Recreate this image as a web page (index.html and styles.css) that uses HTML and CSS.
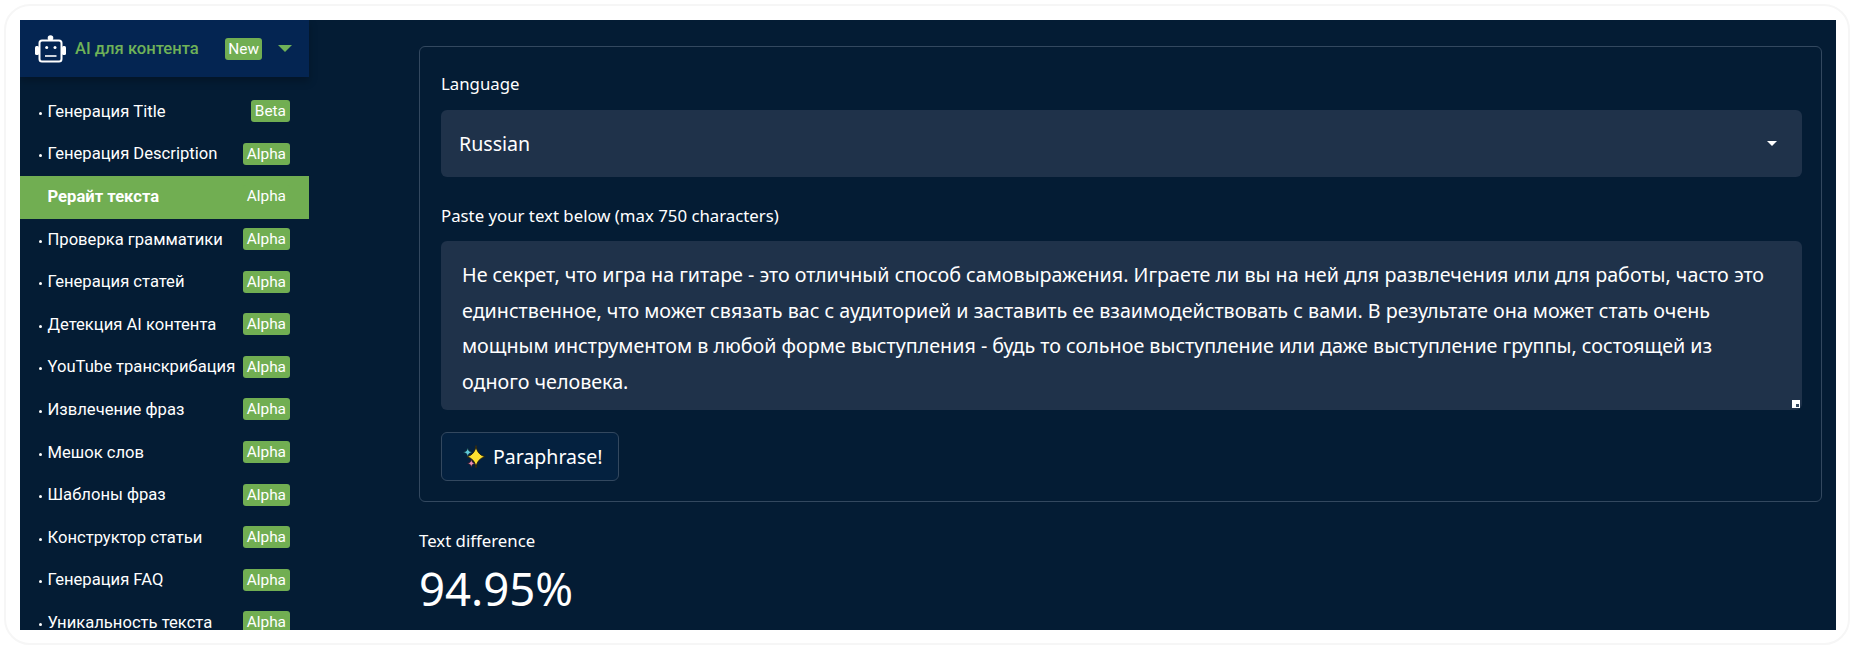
FILE: index.html
```html
<!DOCTYPE html>
<html>

<head>
    <meta charset="UTF-8">
    <title>AI для контента</title>
    <link rel="stylesheet" href="styles.css">
</head>

<body>
    <div class="frame">
        <div class="app">
            <aside class="sidebar">
                <div class="side-header">
                    <svg class="robot" viewBox="0 0 32 28" width="32" height="28">
                        <circle cx="16.5" cy="3" r="2.8" fill="#fff" />
                        <rect x="1" y="11" width="4" height="9" rx="1.5" fill="#fff" />
                        <rect x="28" y="11" width="4" height="9" rx="1.5" fill="#fff" />
                        <rect x="5.5" y="5.5" width="22" height="21" rx="2.5" fill="#042552" stroke="#fff" stroke-width="2" />
                        <circle cx="12.7" cy="12.5" r="1.5" fill="#fff" />
                        <circle cx="21" cy="12.5" r="1.5" fill="#fff" />
                        <rect x="11" y="20.2" width="11.5" height="1.6" fill="#fff" />
                    </svg>
                    <span class="side-title">AI для контента</span>
                    <span class="badge badge-new">New</span>
                    <span class="caret"></span>
                </div>
                <ul class="menu">
                    <li><span class="menu-label">Генерация Title</span><span class="badge">Beta</span></li>
                    <li><span class="menu-label">Генерация Description</span><span class="badge">Alpha</span></li>
                    <li class="active"><span class="menu-label">Рерайт текста</span><span class="badge">Alpha</span></li>
                    <li><span class="menu-label">Проверка грамматики</span><span class="badge">Alpha</span></li>
                    <li><span class="menu-label">Генерация статей</span><span class="badge">Alpha</span></li>
                    <li><span class="menu-label">Детекция AI контента</span><span class="badge">Alpha</span></li>
                    <li><span class="menu-label">YouTube транскрибация</span><span class="badge">Alpha</span></li>
                    <li><span class="menu-label">Извлечение фраз</span><span class="badge">Alpha</span></li>
                    <li><span class="menu-label">Мешок слов</span><span class="badge">Alpha</span></li>
                    <li><span class="menu-label">Шаблоны фраз</span><span class="badge">Alpha</span></li>
                    <li><span class="menu-label">Конструктор статьи</span><span class="badge">Alpha</span></li>
                    <li><span class="menu-label">Генерация FAQ</span><span class="badge">Alpha</span></li>
                    <li><span class="menu-label">Уникальность текста</span><span class="badge">Alpha</span></li>
                </ul>
            </aside>
            <main class="content">
                <form class="form-card">
                    <label class="field-label">Language</label>
                    <div class="select">
                        <span>Russian</span>
                        <span class="select-caret"></span>
                    </div>
                    <label class="field-label field-label-second">Paste your text below (max 750 characters)</label>
                    <div class="textarea">
                        Не секрет, что игра на гитаре - это отличный способ самовыражения. Играете ли вы на ней для развлечения или для работы, часто это единственное, что может связать вас с аудиторией и заставить ее взаимодействовать с вами. В результате она может стать очень мощным инструментом в любой форме выступления - будь то сольное выступление или даже выступление группы, состоящей из одного человека.
                        <span class="resize-handle"></span>
                    </div>
                    <button type="button" class="submit">
                        <svg viewBox="0 0 24 24" width="24" height="24">
                            <path d="M14 .5 Q14.8 9.5 23 11.8 Q14.8 14 14 23 Q13.2 14 5 11.8 Q13.2 9.5 14 .5 Z" fill="#fde030" stroke="#2a2410" stroke-width="1" />
                            <path d="M5.7 3 Q6.2 6.8 10 7.3 Q6.2 7.8 5.7 11.6 Q5.2 7.8 1.4 7.3 Q5.2 6.8 5.7 3 Z" fill="#5fc9d8" stroke="#12343a" stroke-width=".6" />
                            <path d="M9.3 14.4 Q9.7 17.9 13 18.3 Q9.7 18.7 9.3 22.2 Q8.9 18.7 5.6 18.3 Q8.9 17.9 9.3 14.4 Z" fill="#ee8fb0" stroke="#3a1a26" stroke-width=".6" />
                        </svg>
                        <span>Paraphrase!</span>
                    </button>
                </form>
                <div class="metric">
                    <div class="metric-label">Text difference</div>
                    <div class="metric-value">94.95%</div>
                </div>
            </main>
        </div>
    </div>
</body>

</html>
```

FILE: styles.css
```css
* {
    box-sizing: border-box;
}

html,
body {
    height: 100%;
}

body {
    margin: 0;
    padding: 4px 5px 0 4px;
    background: #fff;
    overflow: hidden;
}

.frame {
    height: 641px;
    padding: 14px 12px 12px 14px;
    background: #fff;
    border: 2px solid #f6f6f6;
    border-radius: 26px;
}

.app {
    display: flex;
    height: 610px;
    background: #041c34;
    color: #fff;
    overflow: hidden;
}

.sidebar {
    width: 289px;
    flex-shrink: 0;
    font-family: Roboto, Arial, sans-serif;
}

.side-header {
    display: flex;
    align-items: center;
    height: 57px;
    padding: 0 17px 0 14px;
    background: #042552;
    box-shadow: 0 4px 8px rgba(0, 0, 0, 0.25);
    position: relative;
}

.robot {
    flex-shrink: 0;
}

.side-title {
    margin-left: 9px;
    font-size: 16.6px;
    font-weight: 500;
    color: #6fb258;
    flex: 1;
}

.badge {
    padding: 2px 4px;
    font-size: 15.4px;
    line-height: 18px;
    color: #fff;
    background: #71ae52;
    border-radius: 3px;
}

.badge-new {
    margin-right: 16px;
    padding: 2px 3px;
}

.caret {
    width: 0;
    height: 0;
    border-left: 7px solid transparent;
    border-right: 7px solid transparent;
    border-top: 7px solid #6fb258;
}

.menu {
    list-style: none;
    margin: 14px 0 0;
    padding: 0;
}

.menu li {
    display: flex;
    align-items: center;
    justify-content: space-between;
    height: 42.6px;
    padding: 0 19px 2px 27.5px;
    font-size: 16.6px;
    color: #fff;
}

.menu-label {
    position: relative;
}

.menu-label::before {
    content: "";
    position: absolute;
    left: -9px;
    top: 10px;
    width: 3px;
    height: 3px;
    border-radius: 50%;
    background: #fff;
}

.menu li.active {
    background: #71ae52;
    font-weight: 700;
}

.menu li.active .menu-label::before {
    display: none;
}

.menu li.active .badge {
    font-weight: 400;
}

.content {
    flex: 1;
    padding: 26px 14px 0 110px;
    font-family: "Noto Sans", sans-serif;
}

.form-card {
    height: 456px;
    padding: 25px 19px 0 21px;
    border: 1px solid #33485f;
    border-radius: 6px;
}

.field-label {
    display: block;
    font-size: 16.8px;
    line-height: 24px;
}

.select {
    display: flex;
    align-items: center;
    justify-content: space-between;
    height: 67px;
    margin-top: 14px;
    padding: 0 25px 0 18px;
    font-size: 19.6px;
    background: #1f324a;
    border-radius: 6px;
}

.select-caret {
    width: 0;
    height: 0;
    border-left: 5px solid transparent;
    border-right: 5px solid transparent;
    border-top: 5px solid #fff;
}

.field-label-second {
    margin-top: 27px;
}

.textarea {
    position: relative;
    height: 169px;
    margin-top: 13px;
    padding: 16px 21px;
    font-size: 19.7px;
    line-height: 35.5px;
    background: #1f324a;
    border-radius: 6px;
}

.resize-handle {
    position: absolute;
    right: 2px;
    bottom: 2px;
    width: 8px;
    height: 8px;
    background: #fff;
}

.resize-handle::after {
    content: "";
    position: absolute;
    right: 1px;
    bottom: 1px;
    width: 3px;
    height: 3px;
    background: #33485f;
}

.submit {
    display: flex;
    align-items: center;
    gap: 7px;
    height: 49px;
    margin-top: 22px;
    padding: 0 15px 0 20px;
    font-family: inherit;
    font-size: 19.5px;
    color: #fff;
    background: #04213f;
    border: 1px solid #33485f;
    border-radius: 6px;
}

.metric {
    margin-top: 24px;
}

.metric-label {
    font-size: 16.8px;
    line-height: 30px;
}

.metric-value {
    font-size: 45.5px;
    line-height: 64px;
}
```
